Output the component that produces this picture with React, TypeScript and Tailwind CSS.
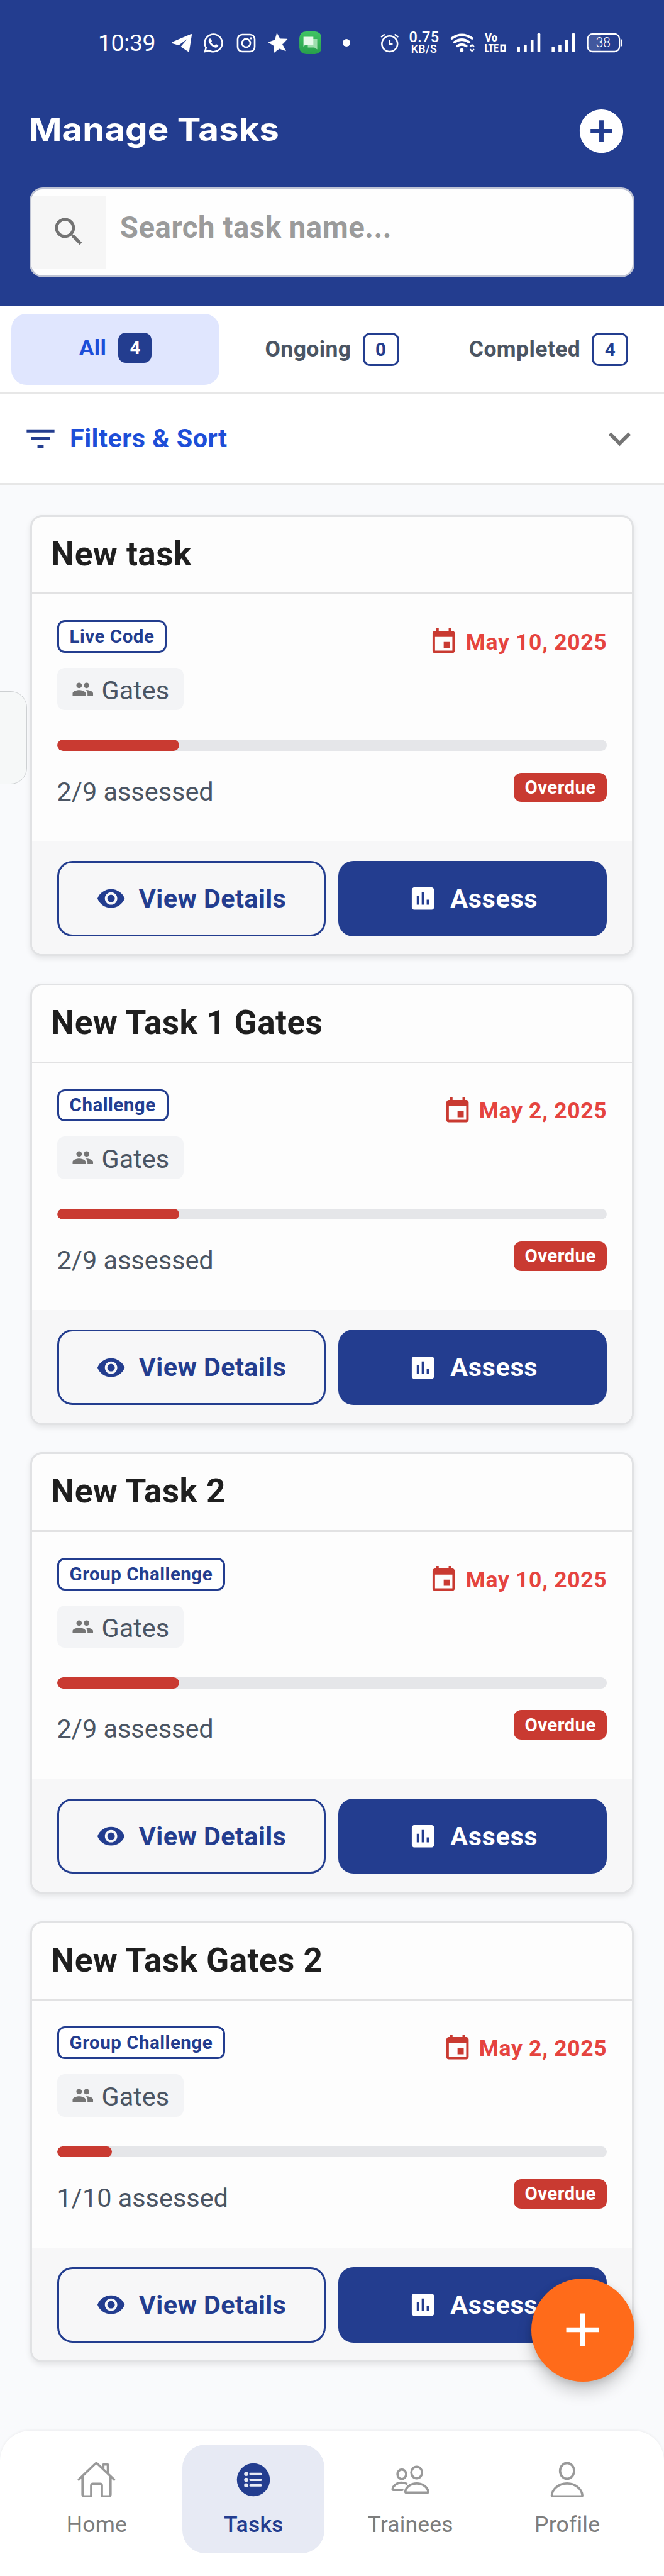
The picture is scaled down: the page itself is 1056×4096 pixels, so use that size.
import type { ReactNode } from "react";
import { FaWhatsapp } from "react-icons/fa";
import {
  MdAdd,
  MdAddCircle,
  MdAssessment,
  MdEvent,
  MdExpandMore,
  MdFilterList,
  MdPeople,
  MdSearch,
  MdVisibility,
} from "react-icons/md";

type Task = { title: string; kind: string; date: string; done: number; total: number };

const tasks: Task[] = [
  { title: "New task", kind: "Live Code", date: "May 10, 2025", done: 2, total: 9 },
  { title: "New Task 1 Gates", kind: "Challenge", date: "May 2, 2025", done: 2, total: 9 },
  { title: "New Task 2", kind: "Group Challenge", date: "May 10, 2025", done: 2, total: 9 },
  { title: "New Task Gates 2", kind: "Group Challenge", date: "May 2, 2025", done: 1, total: 10 },
];

function SignalBars() {
  return (
    <svg viewBox="733 66 116 98" className="ml-[17px] h-[32px] w-[38px] shrink-0" fill="white">
      <rect x="734" y="134" width="14" height="27" rx="4" />
      <rect x="767" y="125" width="14" height="36" rx="4" />
      <rect x="800" y="100" width="14" height="61" rx="4" />
      <rect x="833" y="69" width="14" height="92" rx="4" />
    </svg>
  );
}

function StatusBar() {
  return (
    <div className="flex h-[40px] items-center pl-[156px] text-white">
      <span className="w-[88px] whitespace-nowrap text-[37.4px] leading-[40px] tracking-[-0.4px]">10:39</span>
      <svg viewBox="440 70 104 98" className="ml-[28px] h-[32px] w-[34px] shrink-0" fill="white">
        <path d="M446 115 536 77q6-2 5 4l-12 76q-1 7-7 4l-35-23 33-38-43 31-31-9q-6-4 0-7z" />
      </svg>
      <FaWhatsapp className="ml-[16px] size-[35px] shrink-0" />
      <svg viewBox="754 69 94 94" className="ml-[19px] size-[31px] shrink-0" fill="none" stroke="white" strokeWidth="8">
        <rect x="760" y="75" width="82" height="82" rx="22" />
        <circle cx="801" cy="116" r="20" />
        <circle cx="824" cy="93" r="5" fill="white" stroke="none" />
      </svg>
      <svg viewBox="907 66 98 98" className="ml-[19px] size-[32px] shrink-0" fill="white" stroke="white" strokeWidth="2" strokeLinejoin="round">
        <path d="M951 69 966 96 1002 97 977 123 994 154 963 143 938 162 936 129 910 113 942 101z" />
      </svg>
      <svg viewBox="1057 61 108 110" className="ml-[17.5px] h-[36px] w-[35.5px] shrink-0">
        <defs>
          <linearGradient id="msg" x1="0" y1="0" x2="0" y2="1">
            <stop offset="0" stopColor="#3fc463" />
            <stop offset="1" stopColor="#289f4c" />
          </linearGradient>
        </defs>
        <rect x="1057" y="61" width="108" height="110" rx="32" fill="url(#msg)" />
        <path d="M1098 98h46v50l-14-9h-32z" fill="#9edfae" />
        <path d="M1077 87h48v38h-38l-10 9z" fill="#e6faea" />
      </svg>
      <span className="ml-[33.5px] size-[12px] shrink-0 rounded-full bg-white" />
      <svg viewBox="73 68 90 98" className="ml-[48.5px] h-[32px] w-[29.5px] shrink-0" fill="none" stroke="white" strokeWidth="8" strokeLinecap="round">
        <circle cx="118" cy="122" r="38" />
        <path d="M118 106v17h11M79 87l12-9M145 78l12 9" />
      </svg>
      <div className="ml-[16px] flex w-[48px] shrink-0 flex-col items-center font-medium">
        <span className="text-[23.5px] leading-[20px] tracking-[0.4px]">0.75</span>
        <span className="text-[17.8px] leading-[18px] tracking-[0.3px]">KB/S</span>
      </div>
      <svg viewBox="410 66 122 98" className="ml-[17px] h-[32px] w-[40px] shrink-0" fill="none" stroke="white" strokeWidth="12" strokeLinecap="round">
        <path d="M418 93Q466 60 516 93M430 112Q466 88 502 112M444 131Q466 116 488 131" />
        <circle cx="466" cy="151" r="9" fill="white" stroke="none" />
        <path d="M508 132l8-7 8 7M508 148l8 7 8-7" strokeWidth="7" />
      </svg>
      <svg viewBox="577 66 106 98" className="ml-[15px] h-[32px] w-[34.5px] shrink-0 overflow-visible" fill="white">
        <text x="577" y="110" fontSize="55" fontWeight="800" textLength="62" lengthAdjust="spacingAndGlyphs">Vo</text>
        <text x="576" y="161" fontSize="55" fontWeight="800" textLength="68" lengthAdjust="spacingAndGlyphs">LTE</text>
        <path d="M657 127h20v29h-20z" fill="none" stroke="white" strokeWidth="9" />
      </svg>
      <SignalBars />
      <SignalBars />
      <svg viewBox="1067 66 178 98" className="ml-[18px] h-[32px] w-[58px] shrink-0">
        <rect x="1076" y="76" width="60" height="78" fill="white" fillOpacity="0.14" />
        <rect x="1072" y="72" width="155" height="86" rx="24" fill="none" stroke="white" strokeWidth="7" />
        <rect x="1234" y="98" width="8" height="34" rx="4" fill="white" />
        <text x="1112" y="138" fontSize="66" fontWeight="300" fill="white" textLength="71" lengthAdjust="spacingAndGlyphs">38</text>
      </svg>
    </div>
  );
}

function Header() {
  return (
    <header className="h-[487.4px] shrink-0 bg-[#233d8f] pt-[48px]">
      <StatusBar />
      <div className="mt-[79px] flex h-[83px] items-center justify-between pr-[58px] pl-[46px]">
        <h1 className="origin-left scale-x-[1.095] pb-[7px] font-['Inter',sans-serif] text-[51.5px] leading-[62px] font-bold text-white">
          Manage Tasks
        </h1>
        <MdAddCircle className="size-[83px] text-white" />
      </div>
      <div className="mx-[47.3px] mt-[47.5px] flex h-[143.5px] items-center overflow-hidden rounded-[21px] border-[3px] border-[#bfc4d4] bg-[#fefefe]">
        <div className="flex h-[117px] w-[119px] items-center justify-center bg-[#f6f6f6] pb-[2px]">
          <MdSearch className="size-[59px] text-[#737373]" />
        </div>
        <span className="pb-[14px] pl-[21.5px] text-[47.3px] leading-[60px] font-bold tracking-[0.55px] text-[#9b9b9b]">
          Search task name...
        </span>
      </div>
    </header>
  );
}

function Tab({ label, count }: { label: string; count: number }) {
  return (
    <div className="flex h-[112.5px] flex-1 items-center justify-center gap-[18px] text-[35.5px] font-bold tracking-[0.4px] text-[#4b5563]">
      {label}
      <span className="flex h-[53px] w-[58px] items-center justify-center rounded-[12px] border-[3px] border-[#233d8f] text-[29.5px] tracking-normal text-[#233d8f]">
        {count}
      </span>
    </div>
  );
}

function Tabs() {
  return (
    <div className="flex h-[139px] shrink-0 gap-[12.8px] border-b-[3px] border-[#e7e7e7] bg-white px-[17.7px] pt-[12px]">
      <div className="flex h-[112.5px] flex-1 items-center justify-center gap-[19px] rounded-[24px] bg-[#e0e6fe] pb-[5px] text-[35.5px] font-bold tracking-[0.35px] text-[#1d4ed8]">
        All
        <span className="flex h-[47.5px] w-[53px] items-center justify-center rounded-[12px] bg-[#233d8f] text-[29.5px] tracking-normal text-white">
          4
        </span>
      </div>
      <Tab label="Ongoing" count={0} />
      <Tab label="Completed" count={4} />
    </div>
  );
}

function Filters() {
  return (
    <div className="flex h-[145px] shrink-0 items-center border-b-[3px] border-[#e7e7e7] bg-white px-[35px]">
      <MdFilterList className="size-[59px] text-[#233d8f]" />
      <span className="flex-1 pl-[17px] text-[41.4px] font-bold tracking-[0.45px] text-[#1d4ed8]">Filters &amp; Sort</span>
      <MdExpandMore className="size-[71px] text-[#757575]" />
    </div>
  );
}

function TaskCard({ title, kind, date, done, total }: Task) {
  return (
    <article className="flex h-[701.5px] shrink-0 flex-col overflow-hidden rounded-[19px] border-[3px] border-[#e1e2e4] bg-[#fdfdfd] shadow-[0_4px_10px_rgba(0,0,0,0.09)]">
      <h2 className="flex h-[123.5px] shrink-0 items-center border-b-[3px] border-[#e2e2e3] pb-[1px] pl-[30px] text-[53.2px] font-bold tracking-[0.4px] text-[#1f1f1f]">
        {title}
      </h2>
      <div className="h-[392.5px] shrink-0 px-[39.8px] pt-[41px]">
        <div className="flex items-start justify-between">
          <div className="flex flex-col items-start gap-[24.3px]">
            <span className="flex h-[51.6px] items-center rounded-[12px] border-[3px] border-[#233d8f] bg-white px-[17px] text-[29.5px] font-bold tracking-[0.5px] text-[#233d8f]">
              {kind}
            </span>
            <span className="flex h-[67.3px] w-[201.4px] items-center gap-[11.7px] rounded-[12px] bg-[#f3f4f6] pl-[23.7px]">
              <MdPeople className="size-[35.5px] text-[#757575]" />
              <span className="pt-[4px] text-[41.4px] leading-[48px] text-[#4b5563]">Gates</span>
            </span>
          </div>
          <div className="mt-[11px] flex items-center gap-[11px]">
            <MdEvent className="size-[47.3px] text-[#c93a31]" />
            <span className="text-[35.5px] leading-[44px] font-bold tracking-[0.7px] text-[#e5443f]">{date}</span>
          </div>
        </div>
        <div className="mt-[47px] h-[17.7px] overflow-hidden rounded-full bg-[#e5e6e9]">
          <div className="h-full rounded-full bg-[#c93a31]" style={{ width: `${(done / total) * 100}%` }} />
        </div>
        <div className="mt-[34.6px] flex items-start justify-between">
          <span className="text-[41.4px] leading-[60px] text-[#4b5563]">
            {done}/{total} assessed
          </span>
          <span className="flex h-[46.8px] w-[148.5px] items-center justify-center rounded-[12px] bg-[#c93a31] text-[29.5px] font-bold tracking-[0.4px] text-white">
            Overdue
          </span>
        </div>
      </div>
      <div className="grid flex-1 grid-cols-2 content-start gap-[20.5px] bg-[#f7f7f8] px-[39.8px] pt-[31.4px]">
        <button className="flex h-[119.6px] items-center justify-center gap-[20.5px] rounded-[24px] border-[3px] border-[#233d8f] text-[41.4px] font-bold tracking-[0.4px] text-[#233d8f]">
          <MdVisibility className="size-[47.3px]" />
          View Details
        </button>
        <button className="flex h-[119.6px] items-center justify-center gap-[20.5px] rounded-[24px] bg-[#233d8f] text-[41.4px] font-bold tracking-[0.6px] text-white">
          <MdAssessment className="size-[47.3px]" />
          Assess
        </button>
      </div>
    </article>
  );
}

function NavItem({ label, active = false, children }: { label: string; active?: boolean; children: ReactNode }) {
  return (
    <div
      className={
        active
          ? "flex h-[172.6px] flex-1 flex-col items-center rounded-[37px] bg-[#e7eaf4] pt-[24px] font-medium text-[#233d8f]"
          : "flex h-[172.6px] flex-1 flex-col items-center pt-[24px] text-[#7d7d7d]"
      }
    >
      {children}
      <span className="mt-[19px] text-[35.5px] leading-[40px] tracking-[0.2px]">{label}</span>
    </div>
  );
}

function BottomNav() {
  return (
    <nav className="flex h-[231px] shrink-0 gap-[23.6px] rounded-t-[48px] bg-white px-[41px] pt-[22px] shadow-[0_-1px_4px_rgba(0,0,0,0.06)]">
      <NavItem label="Home">
        <svg viewBox="102 37.5 195 195" className="size-[64px]" fill="none" stroke="#999999" strokeWidth="11" strokeLinecap="round" strokeLinejoin="round">
          <path d="M112 134 191 58q6-6 12 0l80 76" />
          <path d="M130 122v84q0 9 9 9h33v-52q0-9 9-9h34q9 0 9 9v52h33q9 0 9-9v-84M231 80V61h22v42" />
        </svg>
      </NavItem>
      <NavItem label="Tasks" active>
        <svg viewBox="860.5 37.5 195 195" className="size-[64px]">
          <circle cx="958" cy="135" r="80" fill="#233d8f" />
          <g fill="#e7eaf4">
            <circle cx="923" cy="107" r="10" />
            <circle cx="923" cy="135" r="10" />
            <circle cx="923" cy="162" r="10" />
            <rect x="938" y="101" width="62" height="12" rx="6" />
            <rect x="938" y="129" width="62" height="12" rx="6" />
            <rect x="938" y="156" width="62" height="12" rx="6" />
          </g>
        </svg>
      </NavItem>
      <NavItem label="Trainees">
        <svg viewBox="90 37.5 195 195" className="size-[64px]" fill="none" stroke="#999999" strokeWidth="11" strokeLinecap="round" strokeLinejoin="round">
          <ellipse cx="217" cy="100" rx="26" ry="28" />
          <path d="M162 193C164 168 190 153 217 153S270 168 273 193q0 4-4 4H166q-4 0-4-4z" />
          <ellipse cx="145" cy="108" rx="21" ry="23" />
          <path d="M168 154C159 149 150 149 143 149 120 150 102 164 100 180q0 4 4 4h44" />
        </svg>
      </NavItem>
      <NavItem label="Profile">
        <svg viewBox="849 37.5 195 195" className="size-[64px]" fill="none" stroke="#999999" strokeWidth="11" strokeLinecap="round" strokeLinejoin="round">
          <ellipse cx="946" cy="92" rx="34" ry="38" />
          <path d="M872 211C874 180 905 153 946 153S1018 180 1020 211q0 4-4 4H876q-4 0-4-4z" />
        </svg>
      </NavItem>
    </nav>
  );
}

export default function App() {
  return (
    <div className="relative flex h-[4096px] w-[1056px] flex-col overflow-hidden bg-[#f9fafc] font-['Roboto',sans-serif]">
      <Header />
      <Tabs />
      <Filters />
      <main className="flex flex-1 flex-col gap-[43.9px] px-[47.8px] pt-[47.3px]">
        {tasks.map((task) => (
          <TaskCard key={task.title} {...task} />
        ))}
      </main>
      <BottomNav />
      <div className="absolute top-[1099px] left-[-2px] h-[148px] w-[45px] rounded-r-[26px] border border-[#cdd0d2] bg-[#f6f8f8]" />
      <button className="absolute top-[3622.5px] left-[844.6px] flex size-[164px] items-center justify-center rounded-full bg-[#ff6b1a] shadow-[0_16px_24px_rgba(0,0,0,0.18),0_4px_12px_rgba(0,0,0,0.12)]">
        <MdAdd className="size-[89px] text-white" />
      </button>
    </div>
  );
}
